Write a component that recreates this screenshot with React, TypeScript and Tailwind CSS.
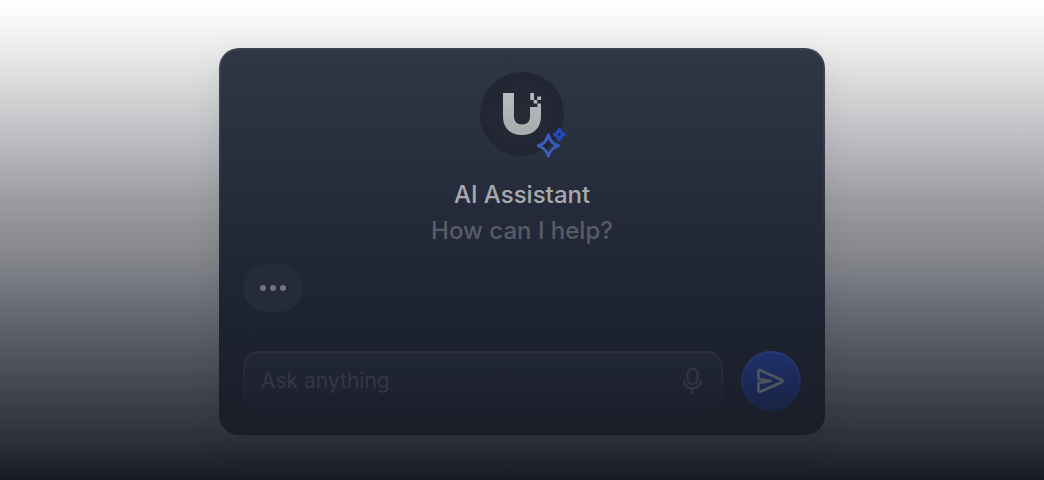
function Logo() {
  return (
    <svg width="38" height="42" viewBox="0 0 38 42" aria-hidden="true">
      <defs>
        <linearGradient id="logo-fill" x1="0" y1="0" x2="0" y2="42" gradientUnits="userSpaceOnUse">
          <stop stopColor="#b9bcbf" />
          <stop offset="1" stopColor="#a8abae" />
        </linearGradient>
      </defs>
      <g fill="url(#logo-fill)">
        <path d="M0 0h11v23.500c0 5 3 8 8 8s8-3 8-8V14h7.300v-3.500H38v13C38 35 30.500 42 19 42S0 35 0 23.500z" />
        <path d="M27.300 0H31v7h-3.700zM30.700 7h3.600v3.500h-3.600zM34.300 3.500H38V7h-3.700z" />
      </g>
    </svg>
  );
}

function Sparkles() {
  return (
    <svg
      className="absolute -right-1 -bottom-1 size-8"
      viewBox="0 0 32 32"
      fill="none"
      strokeWidth="3"
      strokeLinejoin="round"
      aria-hidden="true"
    >
      <path
        stroke="#3b5cbc"
        d="M12.300 7c2 6.500 4.500 9 10 10.700-5.500 1.800-8 4.300-10 10.600-2-6.300-4.500-8.800-10-10.600C7.800 16 10.300 13.500 12.300 7z"
      />
      <path
        stroke="#2149bc"
        d="M23.300 1.300c1 3.200 2 4.200 5 5.200-3 1-4 2-5 5.200-1-3.200-2-4.200-5-5.200 3-1 4-2 5-5.200z"
      />
    </svg>
  );
}

function MicIcon() {
  return (
    <svg width="22" height="28" viewBox="0 0 22 28" fill="none" stroke="#313541" strokeWidth="2.400" aria-hidden="true">
      <rect x="4.500" y="1.800" width="10" height="15.400" rx="5" />
      <path d="M.8 13.300c.6 4.700 4.100 8 8.700 8s8.100-3.300 8.700-8M9.500 21.500v5" />
    </svg>
  );
}

function SendIcon() {
  return (
    <svg width="30" height="28" viewBox="0 0 30 28" fill="none" stroke="#50555f" strokeWidth="2.600" strokeLinecap="round" strokeLinejoin="round" aria-hidden="true">
      <path d="M4.200 3.200 26 13c1 .5 1 1.500 0 2L4.200 24.800c-1 .4-1.800-.2-1.800-1.200V16l12.200-2-12.200-2V4.400c0-1 .8-1.600 1.800-1.200z" />
    </svg>
  );
}

function TypingBubble() {
  return (
    <div className="mt-[15px] flex h-12 w-15 items-center justify-center gap-1 rounded-full bg-[#252b39]">
      <span className="size-1.5 rounded-full bg-[#717579]" />
      <span className="size-1.5 rounded-full bg-[#717579]" />
      <span className="size-1.5 rounded-full bg-[#717579]" />
    </div>
  );
}

function Composer() {
  return (
    <form className="mt-[39px] flex gap-[18px]" onSubmit={(e) => e.preventDefault()}>
      <div className="flex h-15 min-w-0 flex-1 items-center rounded-2xl border-2 border-transparent px-4 [background:linear-gradient(#212734,#1c202c)_padding-box,linear-gradient(#2b303c,#1c202c)_border-box]">
        <input
          type="text"
          aria-label="Ask anything"
          placeholder="Ask anything"
          className="min-w-0 flex-1 bg-transparent text-[21px] text-[#8a8e96] outline-none placeholder:text-[#343843]"
        />
        <button type="button" aria-label="Use microphone" className="shrink-0">
          <MicIcon />
        </button>
      </div>
      <button
        type="submit"
        aria-label="Send"
        className="flex size-15 shrink-0 items-center justify-center rounded-full border-2 border-transparent [background:linear-gradient(#1d306c,#192343)_padding-box,linear-gradient(#273a72,#192343)_border-box]"
      >
        <SendIcon />
      </button>
    </form>
  );
}

export default function App() {
  return (
    <main className="min-h-screen bg-[linear-gradient(#ffffff_0%,#ececec_10%,#cfd1d2_21%,#bfc0c5_28%,#9b9ca0_42%,#818386_55%,#7b7e87_57%,#6a6c75_64%,#52555e_74%,#3d404a_84%,#2c303a_92%,#1a1d28_99%,#151520_100%)] px-6 pt-12 pb-11 font-['Inter','Liberation_Sans',sans-serif]">
      <section className="mx-auto max-w-[606px] rounded-[20px] border-2 border-transparent p-[22px] shadow-[0_8px_32px_rgba(0,0,0,0.08)] [background:linear-gradient(#2f3747,#252b3a_40%,#1d2330_70%,#1a1e29)_padding-box,linear-gradient(#3c4453,#262c3a_50%,#1d2330_70%,#1a1e29)_border-box]">
        <header className="text-center">
          <div className="relative mx-auto mb-[21px] flex size-21 items-center justify-center rounded-full bg-[radial-gradient(#252b37,#1f2430)]">
            <Logo />
            <Sparkles />
          </div>
          <h1 className="text-2xl leading-9 font-medium text-[#a8aaae]">AI Assistant</h1>
          <p className="text-2xl leading-9 font-medium text-[#575c66]">How can I help?</p>
        </header>
        <TypingBubble />
        <Composer />
      </section>
    </main>
  );
}
